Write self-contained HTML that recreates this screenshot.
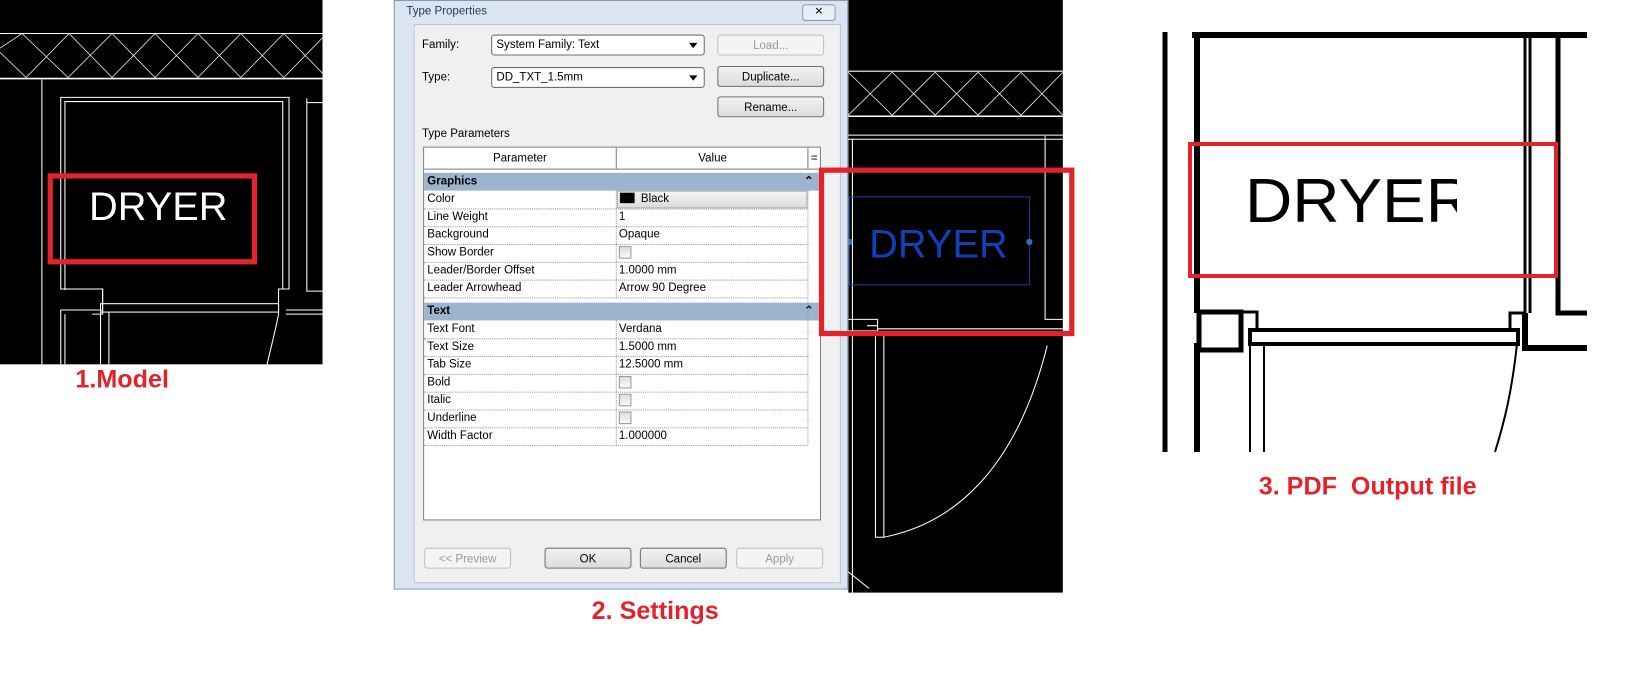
<!DOCTYPE html>
<html><head><meta charset="utf-8"><style>
body{margin:0;width:1642px;height:678px;background:#fff;position:relative;overflow:hidden;font-family:"Liberation Sans",sans-serif}
#w{position:absolute;left:0;top:0;width:1568px;height:648px;transform:scale(1.0472);transform-origin:0 0}
.a{position:absolute}
.lbl{position:absolute;color:#e3232b;font-weight:bold;font-size:24px;font-family:"Liberation Sans",sans-serif}
.dlg{position:absolute;left:376px;top:0;width:434px;height:563px;background:#dbe5f1;border:1px solid #8a9aae;box-sizing:border-box}
.in{position:absolute;left:18px;top:22px;width:406px;height:532px;background:#f0f0f0;border:1px solid #b9c4d1}
.t{font-size:11px;color:#000}
.btn{position:absolute;height:20px;border:1px solid #707070;border-radius:3px;background:linear-gradient(#f2f2f2,#dcdcdc);font-size:11px;text-align:center;line-height:20px;box-sizing:border-box}
.dis{color:#9a9a9a;border-color:#c0c0c0;background:#f4f4f4}
.sel{position:absolute;height:20px;border:1px solid #707070;border-radius:3px;background:#fff;font-size:11px;line-height:18px;padding-left:4px;box-sizing:border-box}
.sel:after{content:"";position:absolute;right:6px;top:7px;border:4px solid transparent;border-top:5px solid #000}
.tbl{position:absolute;left:404px;top:140px;width:380px;height:357px;background:#fff;border:1px solid #828282;box-sizing:border-box}
.row{position:absolute;left:0;width:366px;height:17px;border-bottom:1px dotted #999;font-size:11px;line-height:17px}
.row .k{position:absolute;left:3px}
.row .v{position:absolute;left:186px}
.row i{position:absolute;left:183px;top:0;height:17px;border-left:1px dotted #999}
.grp{position:absolute;left:0;width:377px;height:17px;background:#9db4cf;font-weight:bold;font-size:11px;line-height:17px}
.cb{display:inline-block;width:10px;height:10px;border:1px solid #999;background:linear-gradient(#ddd,#fafafa);vertical-align:middle}
</style></head><body><div id="w">

<!-- Panel 1 -->
<svg class="a" style="left:0;top:0" width="308" height="348">
<rect width="308" height="348" fill="#000"/>
<line x1="0" y1="32" x2="308" y2="32" stroke="#fff"/>
<line x1="0" y1="75" x2="308" y2="75" stroke="#fff" stroke-width="1.5"/>
<g stroke="#fff" stroke-width="0.7">
<path d="M0 50 L25 74 M0 46 L21 32 M21 32 L65 74 M25 74 L66 32 M66 32 L107 74 M65 74 L107 32 M107 32 L148 74 M107 74 L148 32 M148 32 L189 74 M148 74 L189 32 M189 32 L230 74 M189 74 L230 32 M230 32 L271 74 M230 74 L271 32 M271 32 L308 70 M271 74 L308 36"/>
</g>
<g stroke="#fff" fill="none" stroke-width="1">
<path d="M40 348 V76"/><path d="M58 348 V296 H98 V276 H58 V93 H276 V276 H266 V300"/>
<path d="M62 348 V300 M62 277 V97 H270 V276"/>
<path d="M88 276 H98 V300 H88"/>
<rect x="96" y="290" width="170" height="8"/>
<path d="M96 298 V348 M104 298 V348"/>
<path d="M266 300 C262 320 258 335 255 348"/>
<path d="M273 300 H308 M273 296 H308"/>
<path d="M293 94 V278 H308 M293 98 H308"/>
</g>
<rect x="48" y="168" width="195" height="82" fill="none" stroke="#e3232b" stroke-width="5"/>
<text x="85" y="210" fill="#fff" font-size="38" font-family="Liberation Sans">DRYER</text>
</svg>
<div class="lbl" style="left:72px;top:349px">1.Model</div>

<!-- Panel 2 CAD -->
<svg class="a" style="left:810px;top:0" width="205" height="566">
<rect width="205" height="566" fill="#000"/>
<line x1="0" y1="68" x2="205" y2="68" stroke="#fff"/>
<line x1="0" y1="111" x2="205" y2="111" stroke="#fff" stroke-width="1.5"/>
<g stroke="#fff" stroke-width="0.7"><path d="M0 69 L42 110 M0 110 L42 69 M42 69 L83 110 M42 110 L83 69 M83 69 L124 110 M83 110 L124 69 M124 69 L165 110 M124 110 L165 69 M165 69 L205 110 M165 110 L205 69"/></g>
<g stroke="#fff" fill="none">
<path d="M0 129 H205 M0 133 H205 M4 133 V566"/>
<path d="M0 305 H28 V316 H0 M28 311 H18 M28 314 H205 M28 320 H205"/>
<rect x="26" y="318" width="8" height="195"/>
<path d="M34 513 C100 500 160 450 190 330"/>
<path d="M0 546 L20 562"/>
<path d="M188 130 V305 H205"/>
</g>
<rect x="1" y="188" width="172" height="84" fill="none" stroke="#1c3f94" stroke-width="1"/>
<circle cx="1" cy="231" r="3" fill="#3a6db5"/><circle cx="173" cy="231" r="3" fill="#3a6db5"/>
<text x="20" y="246" fill="#1140b8" font-size="38" font-family="Liberation Sans">DRYER</text>
</svg>

<!-- Dialog -->
<div class="dlg">
<div class="a t" style="left:11px;top:4px;color:#1e395b;font-size:11px">Type Properties</div>
<div class="a" style="left:389px;top:3px;width:30px;height:14px;border:1px solid #8a9aae;border-radius:3px;background:#e8eef5;font-size:10px;text-align:center;line-height:14px">✕</div>
<div class="in"></div>
</div>
<div class="a t" style="left:403px;top:37px">Family:</div>
<div class="sel" style="left:469px;top:33px;width:204px">System Family: Text</div>
<div class="a t" style="left:403px;top:68px">Type:</div>
<div class="sel" style="left:469px;top:64px;width:204px">DD_TXT_1.5mm</div>
<div class="btn dis" style="left:685px;top:33px;width:102px">Load...</div>
<div class="btn" style="left:685px;top:63px;width:102px">Duplicate...</div>
<div class="btn" style="left:685px;top:92px;width:102px">Rename...</div>
<div class="a t" style="left:403px;top:122px">Type Parameters</div>

<div class="tbl">
<div class="a" style="left:0;top:0;width:378px;height:20px;border-bottom:1px solid #828282;font-size:11px;line-height:20px">
<span class="a" style="left:0;width:183px;text-align:center">Parameter</span>
<span class="a" style="left:183px;width:183px;text-align:center;border-left:1px solid #828282;height:20px">Value</span>
<span class="a" style="left:366px;width:11px;text-align:center;border-left:1px solid #828282;height:20px">=</span></div>
<div class="grp" style="top:24px"><span style="padding-left:3px">Graphics</span><span class="a" style="right:5px">⌃</span></div>
<div class="row" style="top:41px"><span class="k">Color</span><i></i><span class="a" style="left:184px;top:0;width:180px;height:15px;background:linear-gradient(#f4f4f4,#dcdcdc);border:1px solid #aaa;line-height:15px"><span style="display:inline-block;width:14px;height:10px;background:#000;margin:0 6px 0 2px;vertical-align:-1px"></span>Black</span></div>
<div class="row" style="top:58px"><span class="k">Line Weight</span><i></i><span class="v">1</span></div>
<div class="row" style="top:75px"><span class="k">Background</span><i></i><span class="v">Opaque</span></div>
<div class="row" style="top:92px"><span class="k">Show Border</span><i></i><span class="v"><span class="cb"></span></span></div>
<div class="row" style="top:109px"><span class="k">Leader/Border Offset</span><i></i><span class="v">1.0000 mm</span></div>
<div class="row" style="top:126px"><span class="k">Leader Arrowhead</span><i></i><span class="v">Arrow 90 Degree</span></div>
<div class="grp" style="top:148px"><span style="padding-left:3px">Text</span><span class="a" style="right:5px">⌃</span></div>
<div class="row" style="top:165px"><span class="k">Text Font</span><i></i><span class="v">Verdana</span></div>
<div class="row" style="top:182px"><span class="k">Text Size</span><i></i><span class="v">1.5000 mm</span></div>
<div class="row" style="top:199px"><span class="k">Tab Size</span><i></i><span class="v">12.5000 mm</span></div>
<div class="row" style="top:216px"><span class="k">Bold</span><i></i><span class="v"><span class="cb"></span></span></div>
<div class="row" style="top:233px"><span class="k">Italic</span><i></i><span class="v"><span class="cb"></span></span></div>
<div class="row" style="top:250px"><span class="k">Underline</span><i></i><span class="v"><span class="cb"></span></span></div>
<div class="row" style="top:267px"><span class="k">Width Factor</span><i></i><span class="v">1.000000</span></div>
<div class="a" style="left:366px;top:41px;height:243px;border-left:1px dotted #999"></div>
</div>

<div class="btn dis" style="left:405px;top:523px;width:83px">&lt;&lt; Preview</div>
<div class="btn" style="left:520px;top:523px;width:83px">OK</div>
<div class="btn" style="left:611px;top:523px;width:83px">Cancel</div>
<div class="btn dis" style="left:703px;top:523px;width:83px">Apply</div>

<div class="a" style="left:782px;top:160px;width:244px;height:161px;border:5px solid #e3232b;box-sizing:border-box"></div>
<div class="lbl" style="left:565px;top:570px">2. Settings</div>
<div class="lbl" style="left:1202px;top:451px">3. PDF&nbsp; Output file</div>
</div>

<!-- Panel 3 (actual coordinates) -->
<svg class="a" style="left:0;top:0" width="1642" height="678">
<defs><clipPath id="c"><rect x="1200" y="150" width="257" height="90"/></clipPath></defs>
<g stroke="#000" fill="none">
<path d="M1165 32 V452" stroke-width="5"/>
<path d="M1197 32 V313 M1197 343 V452" stroke-width="6"/>
<path d="M1192 35 H1587" stroke-width="6"/>
<path d="M1525 35 V313 M1530 35 V313" stroke-width="3"/>
<path d="M1558 35 V313 H1587" stroke-width="5"/>
<path d="M1525 313 V348 H1587" stroke-width="6"/>
<rect x="1199" y="312" width="42" height="38" stroke-width="5"/>
<path d="M1242 312 H1257 V330" stroke-width="3"/>
<path d="M1510 330 V313 H1525" stroke-width="3"/>
<rect x="1250" y="330" width="268" height="14" stroke-width="4"/>
<path d="M1250 344 V452 M1264 344 V452" stroke-width="2"/>
<path d="M1517 344 C1512 390 1505 420 1495 452" stroke-width="2"/>
</g>
<rect x="1190" y="144" width="366" height="132" fill="none" stroke="#e3232b" stroke-width="4"/>
<text x="1245" y="222" fill="#000" font-size="62" textLength="228" lengthAdjust="spacingAndGlyphs" font-family="Liberation Sans" clip-path="url(#c)">DRYER</text>
</svg>
</body></html>
